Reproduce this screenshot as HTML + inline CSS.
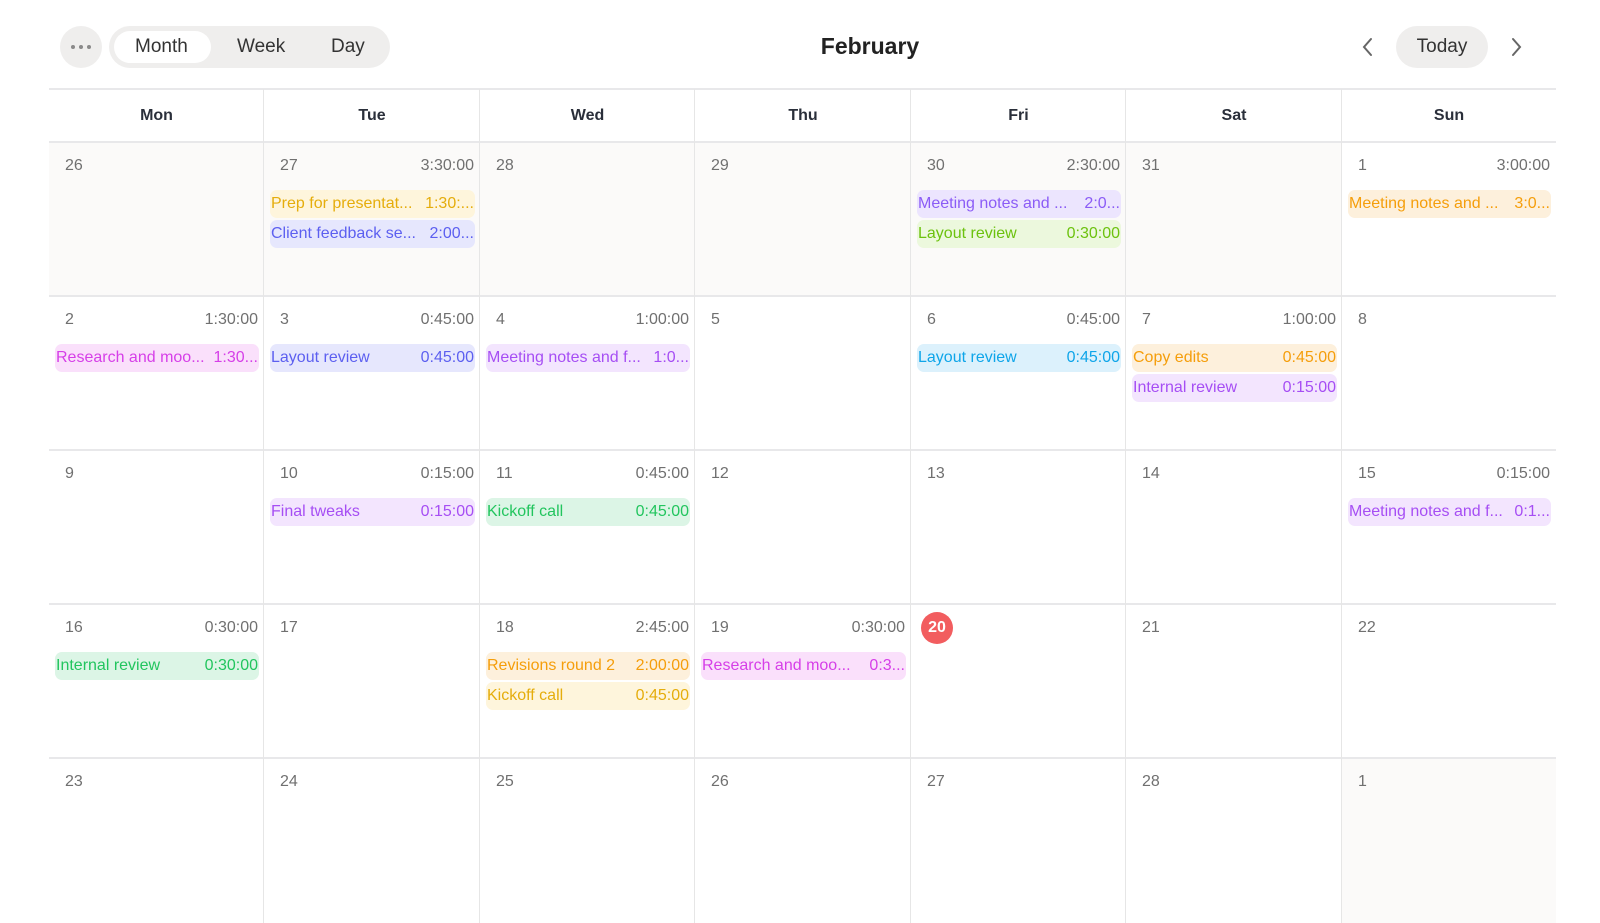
<!DOCTYPE html>
<html><head><meta charset="utf-8"><style>
*{box-sizing:border-box;margin:0;padding:0}
body{width:1600px;height:923px;overflow:hidden;background:#fff;font-family:"Liberation Sans",Arial,sans-serif;position:relative;color:#333}
.abs{position:absolute}
.more{left:60px;top:26px;width:42px;height:42px;border-radius:50%;background:#efeeed}
.more i{position:absolute;top:19px;width:4px;height:4px;border-radius:50%;background:#8a8a8a}
.seg{left:109px;top:26px;width:281px;height:42px;border-radius:21px;background:#efeeed}
.seg .on{position:absolute;left:5px;top:5px;width:97px;height:32px;border-radius:16px;background:#fff}
.seg span{position:absolute;top:10px;font-size:19px;color:#333}
.title{left:0;width:1740px;top:33px;text-align:center;font-size:23px;font-weight:bold;color:#222}
.today{left:1396px;top:26px;width:92px;height:42px;border-radius:21px;background:#efeeed;text-align:center;line-height:42px;font-size:19px;color:#333}
.hdr{top:89px;height:53px;line-height:54px;text-align:center;font-size:16px;font-weight:bold;color:#2a2f3a}
.hline{left:49px;width:1507px;height:2px;background:#e8e8ea}
.vline{top:89px;width:1px;height:834px;background:#e6e6e6}
.cell{position:absolute;height:154px}
.dn{position:absolute;top:15px;left:16px;font-size:16px;color:#707070}
.dt{position:absolute;top:15px;right:6px;font-size:16px;color:#707070}
.ev{position:absolute;left:6px;right:5px;height:28px;border-radius:7px;font-size:16px;line-height:28px;padding:0 1px;display:flex;justify-content:space-between;white-space:nowrap;overflow:hidden}
.yel{background:#fef5dc;color:#e5ad0c}.ind{background:#e6e7fd;color:#5c5ff0}
.vio{background:#ece5fe;color:#8b5cf6}.pur{background:#f3e5fe;color:#a64ef4}
.lim{background:#ecf8dd;color:#6cc20e}.fuc{background:#fae0fb;color:#d63fe8}
.sky{background:#dcf1fc;color:#0ea5e9}.ora{background:#fdf0dc;color:#f59e0b}
.grn{background:#dcf5e6;color:#22c55e}
.today20{position:absolute;left:10px;top:8px;width:32px;height:32px;border-radius:50%;background:#f25d5f;color:#fff;font-weight:bold;font-size:16px;text-align:center;line-height:32px}
</style></head><body>
<div class="abs more"><i style="left:11px"></i><i style="left:19px"></i><i style="left:27px"></i></div>
<div class="abs seg"><div class="on"></div><span style="left:26px">Month</span><span style="left:128px">Week</span><span style="left:222px">Day</span></div>
<div class="abs title">February</div>
<svg class="abs" style="left:1360px;top:37px" width="16" height="20" viewBox="0 0 16 20"><path d="M11 2 L4 10 L11 18" stroke="#666" stroke-width="2" fill="none" stroke-linecap="round"/></svg>
<div class="abs today">Today</div>
<svg class="abs" style="left:1508px;top:37px" width="16" height="20" viewBox="0 0 16 20"><path d="M5 2 L12 10 L5 18" stroke="#666" stroke-width="2" fill="none" stroke-linecap="round"/></svg>

<div class="abs" style="left:49px;top:142px;width:1293px;height:154px;background:#fbfaf9"></div>
<div class="abs" style="left:1342px;top:758px;width:214px;height:165px;background:#fbfaf9"></div>

<div class="abs hdr" style="left:49px;width:215px">Mon</div>
<div class="abs hdr" style="left:264px;width:216px">Tue</div>
<div class="abs hdr" style="left:480px;width:215px">Wed</div>
<div class="abs hdr" style="left:695px;width:216px">Thu</div>
<div class="abs hdr" style="left:911px;width:215px">Fri</div>
<div class="abs hdr" style="left:1126px;width:216px">Sat</div>
<div class="abs hdr" style="left:1342px;width:214px">Sun</div>

<div class="abs hline" style="top:88px"></div>
<div class="abs hline" style="top:141px"></div>
<div class="abs hline" style="top:295px"></div>
<div class="abs hline" style="top:449px"></div>
<div class="abs hline" style="top:603px"></div>
<div class="abs hline" style="top:757px"></div>
<div class="abs vline" style="left:263px"></div>
<div class="abs vline" style="left:479px"></div>
<div class="abs vline" style="left:694px"></div>
<div class="abs vline" style="left:910px"></div>
<div class="abs vline" style="left:1125px"></div>
<div class="abs vline" style="left:1341px"></div>

<div class="cell" style="left:49px;top:142px;width:215px"><span class="dn">26</span></div>
<div class="cell" style="left:264px;top:142px;width:216px"><span class="dn">27</span><span class="dt">3:30:00</span>
<div class="ev yel" style="top:48px"><span>Prep for presentat...</span><span>1:30:...</span></div>
<div class="ev ind" style="top:78px"><span>Client feedback se...</span><span>2:00...</span></div></div>
<div class="cell" style="left:480px;top:142px;width:215px"><span class="dn">28</span></div>
<div class="cell" style="left:695px;top:142px;width:216px"><span class="dn">29</span></div>
<div class="cell" style="left:911px;top:142px;width:215px"><span class="dn">30</span><span class="dt">2:30:00</span>
<div class="ev vio" style="top:48px"><span>Meeting notes and ...</span><span>2:0...</span></div>
<div class="ev lim" style="top:78px"><span>Layout review</span><span>0:30:00</span></div></div>
<div class="cell" style="left:1126px;top:142px;width:216px"><span class="dn">31</span></div>
<div class="cell" style="left:1342px;top:142px;width:214px"><span class="dn">1</span><span class="dt">3:00:00</span>
<div class="ev ora" style="top:48px"><span>Meeting notes and ...</span><span>3:0...</span></div></div>

<div class="cell" style="left:49px;top:296px;width:215px"><span class="dn">2</span><span class="dt">1:30:00</span>
<div class="ev fuc" style="top:48px"><span>Research and moo...</span><span>1:30...</span></div></div>
<div class="cell" style="left:264px;top:296px;width:216px"><span class="dn">3</span><span class="dt">0:45:00</span>
<div class="ev ind" style="top:48px"><span>Layout review</span><span>0:45:00</span></div></div>
<div class="cell" style="left:480px;top:296px;width:215px"><span class="dn">4</span><span class="dt">1:00:00</span>
<div class="ev pur" style="top:48px"><span>Meeting notes and f...</span><span>1:0...</span></div></div>
<div class="cell" style="left:695px;top:296px;width:216px"><span class="dn">5</span></div>
<div class="cell" style="left:911px;top:296px;width:215px"><span class="dn">6</span><span class="dt">0:45:00</span>
<div class="ev sky" style="top:48px"><span>Layout review</span><span>0:45:00</span></div></div>
<div class="cell" style="left:1126px;top:296px;width:216px"><span class="dn">7</span><span class="dt">1:00:00</span>
<div class="ev ora" style="top:48px"><span>Copy edits</span><span>0:45:00</span></div>
<div class="ev pur" style="top:78px"><span>Internal review</span><span>0:15:00</span></div></div>
<div class="cell" style="left:1342px;top:296px;width:214px"><span class="dn">8</span></div>

<div class="cell" style="left:49px;top:450px;width:215px"><span class="dn">9</span></div>
<div class="cell" style="left:264px;top:450px;width:216px"><span class="dn">10</span><span class="dt">0:15:00</span>
<div class="ev pur" style="top:48px"><span>Final tweaks</span><span>0:15:00</span></div></div>
<div class="cell" style="left:480px;top:450px;width:215px"><span class="dn">11</span><span class="dt">0:45:00</span>
<div class="ev grn" style="top:48px"><span>Kickoff call</span><span>0:45:00</span></div></div>
<div class="cell" style="left:695px;top:450px;width:216px"><span class="dn">12</span></div>
<div class="cell" style="left:911px;top:450px;width:215px"><span class="dn">13</span></div>
<div class="cell" style="left:1126px;top:450px;width:216px"><span class="dn">14</span></div>
<div class="cell" style="left:1342px;top:450px;width:214px"><span class="dn">15</span><span class="dt">0:15:00</span>
<div class="ev pur" style="top:48px"><span>Meeting notes and f...</span><span>0:1...</span></div></div>

<div class="cell" style="left:49px;top:604px;width:215px"><span class="dn">16</span><span class="dt">0:30:00</span>
<div class="ev grn" style="top:48px"><span>Internal review</span><span>0:30:00</span></div></div>
<div class="cell" style="left:264px;top:604px;width:216px"><span class="dn">17</span></div>
<div class="cell" style="left:480px;top:604px;width:215px"><span class="dn">18</span><span class="dt">2:45:00</span>
<div class="ev ora" style="top:48px"><span>Revisions round 2</span><span>2:00:00</span></div>
<div class="ev yel" style="top:78px"><span>Kickoff call</span><span>0:45:00</span></div></div>
<div class="cell" style="left:695px;top:604px;width:216px"><span class="dn">19</span><span class="dt">0:30:00</span>
<div class="ev fuc" style="top:48px"><span>Research and moo...</span><span>0:3...</span></div></div>
<div class="cell" style="left:911px;top:604px;width:215px"><span class="today20">20</span></div>
<div class="cell" style="left:1126px;top:604px;width:216px"><span class="dn">21</span></div>
<div class="cell" style="left:1342px;top:604px;width:214px"><span class="dn">22</span></div>

<div class="cell" style="left:49px;top:758px;width:215px"><span class="dn">23</span></div>
<div class="cell" style="left:264px;top:758px;width:216px"><span class="dn">24</span></div>
<div class="cell" style="left:480px;top:758px;width:215px"><span class="dn">25</span></div>
<div class="cell" style="left:695px;top:758px;width:216px"><span class="dn">26</span></div>
<div class="cell" style="left:911px;top:758px;width:215px"><span class="dn">27</span></div>
<div class="cell" style="left:1126px;top:758px;width:216px"><span class="dn">28</span></div>
<div class="cell" style="left:1342px;top:758px;width:214px"><span class="dn">1</span></div>
</body></html>
